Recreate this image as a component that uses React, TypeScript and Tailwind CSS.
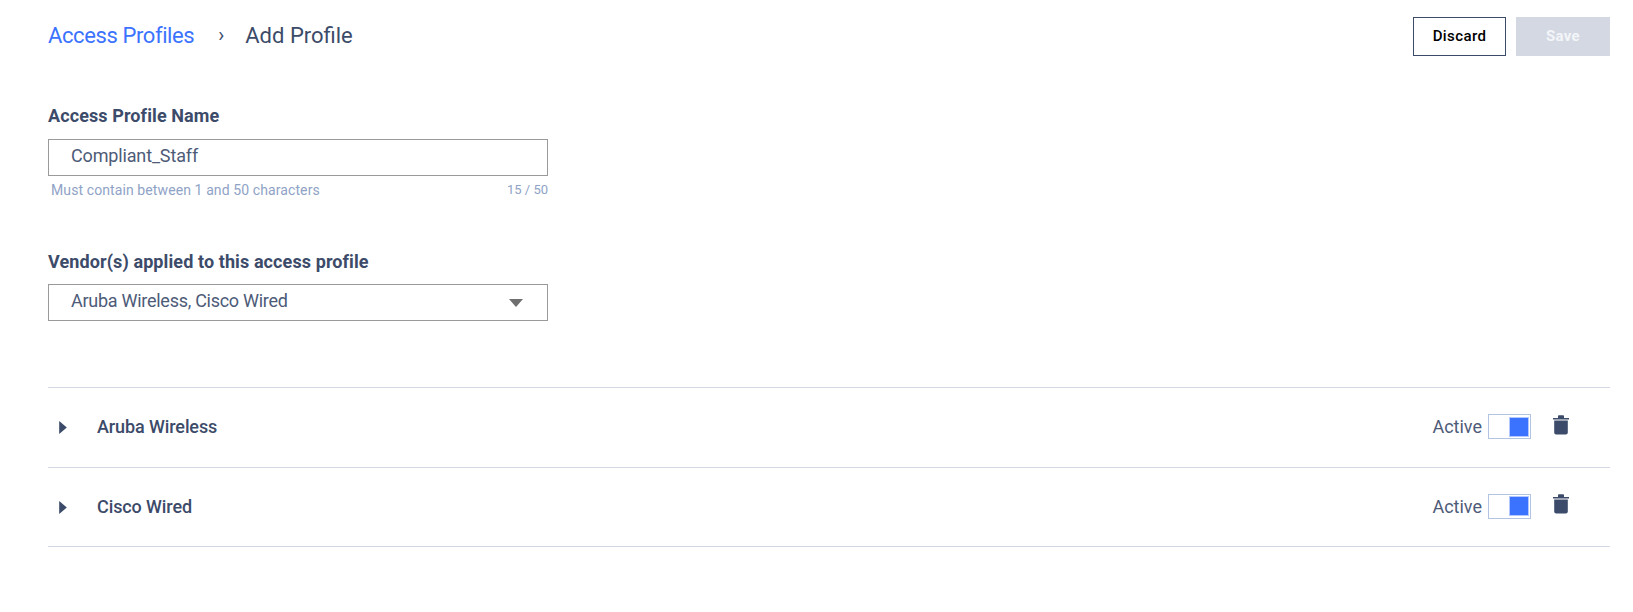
import React from 'react'

const font = { fontFamily: 'Roboto, sans-serif' }

function Trash() {
    return (
        <svg width="16" height="20" viewBox="0 0 16 20" className="block">
            <path d="M0 3h16v1.6H0z M5 1.2C5 .6 5.6.3 6 .3h4c.5 0 1 .3 1 .9V3H5z" fill="#3c4b69" />
            <path d="M1.2 5.6h13.6v12c0 1.2-.9 2-2 2H3.2c-1.1 0-2-.8-2-2z" fill="#3c4b69" />
        </svg>
    )
}

function VendorRow({ name, height }: { name: string; height: string }) {
    return (
        <div className={`flex ${height} items-center border-b border-[#d3d7e3] pb-[2px] pl-[11px] pr-[41px]`}>
            <svg width="8" height="13" viewBox="0 0 7 12" className="mr-[30px] translate-y-[1px]">
                <path d="M0 0l7 6-7 6z" fill="#3c4b69" />
            </svg>
            <span className="text-[18px] font-medium tracking-[-0.1px] text-[#3c4b69]">{name}</span>
            <div className="ml-auto flex items-center">
                <span className="mr-[6px] text-[18px] text-[#4d5b78]">Active</span>
                <div className="mr-[22px] flex h-[25px] w-[43px] items-center justify-end border border-[#b3c3e2] pr-[1px]">
                    <div className="h-[20px] w-[20px] border border-[#b3c8ff] bg-[#3b73ff]" />
                </div>
                <div className="-translate-y-[2px]"><Trash /></div>
            </div>
        </div>
    )
}

export default function App() {
    return (
        <div className="min-h-[612px] bg-white pl-[48px] pr-[23px] pt-[17px]" style={font}>
            <div className="flex items-start justify-between">
                <div className="flex h-[36px] items-center text-[22px]">
                    <span className="tracking-[-0.4px] text-[#3b73ff]">Access Profiles</span>
                    <span className="ml-[24px] mr-[21px] text-[20px] text-[#3c4b69]">›</span>
                    <span className="text-[#3c4b69]">Add Profile</span>
                </div>
                <div className="flex gap-[10px]">
                    <button className="h-[39px] w-[93px] border border-[#3c4b69] text-[15px] font-medium tracking-[0.4px] text-black">Discard</button>
                    <button className="h-[39px] w-[94px] bg-[#d3d8e3] text-[15px] font-bold tracking-[0.3px] text-[#f4f5f8]">Save</button>
                </div>
            </div>

            <div className="mt-[50px] w-[500px]">
                <label className="block text-[18px] font-bold leading-[20px] tracking-[0.1px] text-[#3c4b69]">Access Profile Name</label>
                <div className="mt-[13px] flex h-[37px] items-center border border-[#9a9a9a] pb-[5px] pl-[22px] text-[18px] tracking-[-0.15px] text-[#4d5b78]">Compliant_Staff</div>
                <div className="mt-[6px] flex items-center justify-between pl-[3px] leading-[16px] text-[#8fa3c6]">
                    <span className="text-[14px] tracking-[0.1px]">Must contain between 1 and 50 characters</span>
                    <span className="text-[13px]">15 / 50</span>
                </div>

                <label className="mt-[54px] block text-[18px] font-bold leading-[20px] tracking-[0.1px] text-[#3c4b69]">Vendor(s) applied to this access profile</label>
                <div className="mt-[12px] flex h-[37px] items-center justify-between border border-[#9a9a9a] pb-[5px] pl-[22px] pr-[24px] text-[18px] tracking-[-0.27px] text-[#4d5b78]">
                    <span>Aruba Wireless, Cisco Wired</span>
                    <svg width="14" height="8" viewBox="0 0 14 8" className="translate-y-[3px]"><path d="M0 0h14L7 8z" fill="#6f6f6f" /></svg>
                </div>
            </div>

            <div className="mt-[66px] border-t border-[#d3d7e3]">
                <VendorRow name="Aruba Wireless" height="h-[80px]" />
                <VendorRow name="Cisco Wired" height="h-[79px]" />
            </div>
        </div>
    )
}
